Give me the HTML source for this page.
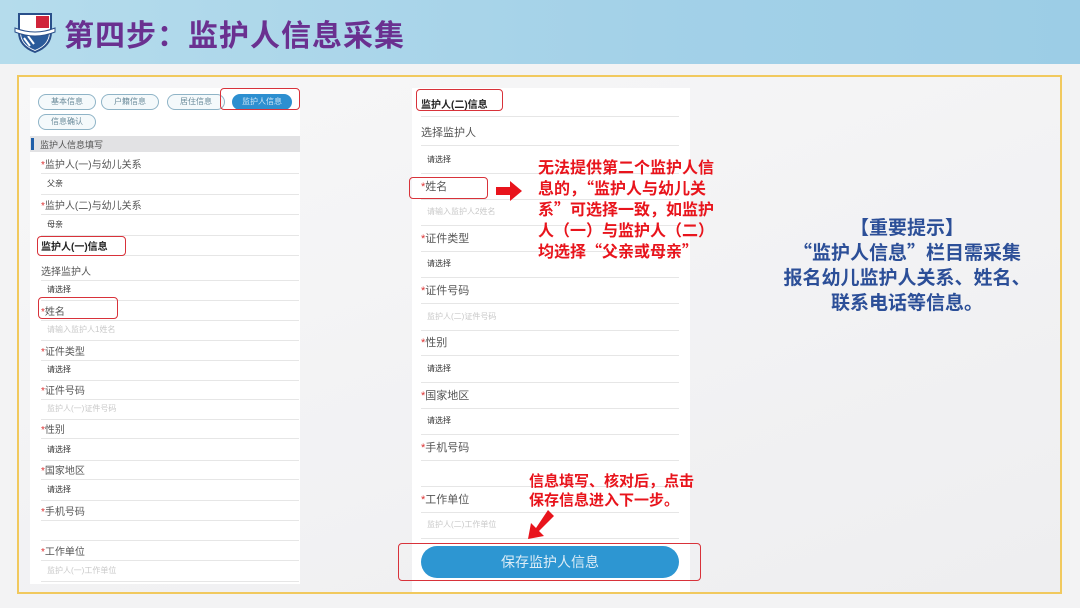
<!DOCTYPE html>
<html><head><meta charset="utf-8"><style>
*{margin:0;padding:0;box-sizing:border-box}
body{width:1080px;height:608px;overflow:hidden;position:relative;background:#f3f3f4;font-family:"Liberation Sans","Noto Sans CJK SC",sans-serif}
.hdr{position:absolute;left:0;top:0;width:1080px;height:64px;background:linear-gradient(90deg,#b5dcec,#a3d1e8 60%,#9ccde6)}
.ttl{position:absolute;left:64px;top:11px;font-size:30px;font-weight:bold;color:#6a3090;letter-spacing:1px}
.frame{position:absolute;left:17px;top:75px;width:1045px;height:519px;border:2px solid #f1c95e;background:linear-gradient(160deg,#f7f7f8,#eeeef0)}
.t{position:absolute;white-space:nowrap}
.pl{position:absolute;background:#fff}
.ln{position:absolute;height:1px;background:#e6e6e6}
.rb{position:absolute;border:1.5px solid #d8323a;border-radius:4px}
.s{color:#d33}
.red{color:#e8141c;font-weight:bold;font-size:16px;line-height:21px;font-family:"Noto Sans CJK SC",sans-serif}
.tab{position:absolute;height:16px;border:1px solid #8fb4c7;border-radius:8px;font-size:8px;color:#6a8a9a;text-align:center;line-height:14px;background:#f4f9fb}
</style></head><body>
<div class="hdr"></div>
<svg style="position:absolute;left:14px;top:8px" width="42" height="46" viewBox="0 0 42 46">
<path d="M5 6 L37 6 L37 24 Q37 38 21 44 Q5 38 5 24Z" fill="#fff" stroke="#2a4f8a" stroke-width="2"/>
<rect x="22" y="8" width="13" height="12" fill="#d0243a"/>
<path d="M7 26 L35 26 Q34 37 21 42 Q8 37 7 26Z" fill="#2a5a9a"/>
<path d="M10 30 L16 38 M14 28 L20 36" stroke="#fff" stroke-width="2"/>
<path d="M1 20 Q21 28 41 20 L41 24 Q21 32 1 24Z" fill="#fff" stroke="#2a4f8a"/>
</svg>
<div class="t ttl">第四步：监护人信息采集</div>
<div class="frame"></div>

<div class="pl" style="left:30px;top:88px;width:270px;height:496px"></div>
<div class="tab" style="left:38px;top:94px;width:58px">基本信息</div>
<div class="tab" style="left:101px;top:94px;width:58px">户籍信息</div>
<div class="tab" style="left:167px;top:94px;width:58px">居住信息</div>
<div class="tab" style="left:232px;top:94px;width:60px;background:#2d8fd0;border-color:#2d8fd0;color:#cfe6f6">监护人信息</div>
<div class="rb" style="left:220px;top:88px;width:80px;height:22px"></div>
<div class="tab" style="left:38px;top:114px;width:58px">信息确认</div>
<div style="position:absolute;left:30px;top:136px;width:270px;height:16px;background:#e2e2e4"></div>
<div style="position:absolute;left:31px;top:138px;width:3px;height:12px;background:#1f5ea8"></div>
<div class="t" style="left:40px;top:138px;font-size:9px;color:#555">监护人信息填写</div>
<div id="L"></div>
<div class="rb" style="left:37px;top:236px;width:89px;height:20px"></div>
<div class="rb" style="left:38px;top:297px;width:80px;height:22px"></div>

<div class="pl" style="left:412px;top:88px;width:278px;height:504px"></div>
<div id="M"></div>
<div class="rb" style="left:416px;top:89px;width:87px;height:22px"></div>
<div class="rb" style="left:409px;top:177px;width:79px;height:22px"></div>
<div style="position:absolute;left:421px;top:546px;width:258px;height:32px;border-radius:16px;background:#2d96d2;color:#dcecf6;font-size:14px;text-align:center;line-height:32px">保存监护人信息</div>
<div class="rb" style="left:398px;top:543px;width:303px;height:38px"></div>

<div class="t red" style="left:538px;top:156px">无法提供第二个监护人信<br>息的，“监护人与幼儿关<br>系”可选择一致，如监护<br>人（一）与监护人（二）<br>均选择“父亲或母亲”</div>
<svg style="position:absolute;left:496px;top:181px" width="26" height="20"><path d="M0 6 H14 V0 L26 10 L14 20 V14 H0Z" fill="#e8141c"/></svg>
<div class="t red" style="left:529px;top:471px;font-size:15px;line-height:19px">信息填写、核对后，点击<br>保存信息进入下一步。</div>
<svg style="position:absolute;left:526px;top:510px" width="28" height="30"><path d="M22 0 L28 6 L13 21 L18 26 L2 29 L5 13 L10 18Z" fill="#e8141c"/></svg>

<div class="t" style="left:777px;top:214px;width:260px;text-align:center;font-size:19px;line-height:25px;font-weight:bold;color:#2c4f98;font-family:'Noto Sans CJK SC',sans-serif">【重要提示】<br>“监护人信息”栏目需采集<br>报名幼儿监护人关系、姓名、<br>联系电话等信息。</div>

<script>
var L=[["*监护人(一)与幼儿关系",163,"l"],["父亲",184,"v"],["*监护人(二)与幼儿关系",204,"l"],["母亲",225,"v"],["监护人(一)信息",245,"b"],["选择监护人",270,"l"],["请选择",290,"v"],["*姓名",310,"l"],["请输入监护人1姓名",330,"p"],["*证件类型",350,"l"],["请选择",370,"v"],["*证件号码",389,"l"],["监护人(一)证件号码",409,"p"],["*性别",428,"l"],["请选择",450,"v"],["*国家地区",469,"l"],["请选择",490,"v"],["*手机号码",510,"l"],["",530,"v"],["*工作单位",550,"l"],["监护人(一)工作单位",571,"p"]];
var M=[["监护人(二)信息",103,"b"],["选择监护人",132,"l"],["请选择",160,"v"],["*姓名",186,"l"],["请输入监护人2姓名",212,"p"],["*证件类型",238,"l"],["请选择",264,"v"],["*证件号码",290,"l"],["监护人(二)证件号码",317,"p"],["*性别",342,"l"],["请选择",369,"v"],["*国家地区",395,"l"],["请选择",421,"v"],["*手机号码",447,"l"],["",473,"v"],["*工作单位",499,"l"],["监护人(二)工作单位",525,"p"]];
function build(arr,x0,w,dy,big){var h="";arr.forEach(function(r){var t=r[0],y=r[1],k=r[2],fs,c,fw="normal",x=x0;
if(k=="l"){fs=big?11:10;c="#555";}else if(k=="v"){fs=8;c="#333";x+=6;}else if(k=="p"){fs=8;c="#c8c8c8";x+=6;}else{fs=10;c="#222";fw="bold";}
t=t.replace("*","<span class='s'>*</span>");
h+="<div class='t' style='left:"+x+"px;top:"+(y-fs*0.7)+"px;font-size:"+fs+"px;color:"+c+";font-weight:"+fw+"'>"+t+"</div>";
h+="<div class='ln' style='left:"+x0+"px;top:"+(y+dy)+"px;width:"+w+"px'></div>";});return h;}
document.getElementById("L").innerHTML=build(L,41,258,10,false);
document.getElementById("M").innerHTML=build(M,421,258,13,true);
</script>
</body></html>
